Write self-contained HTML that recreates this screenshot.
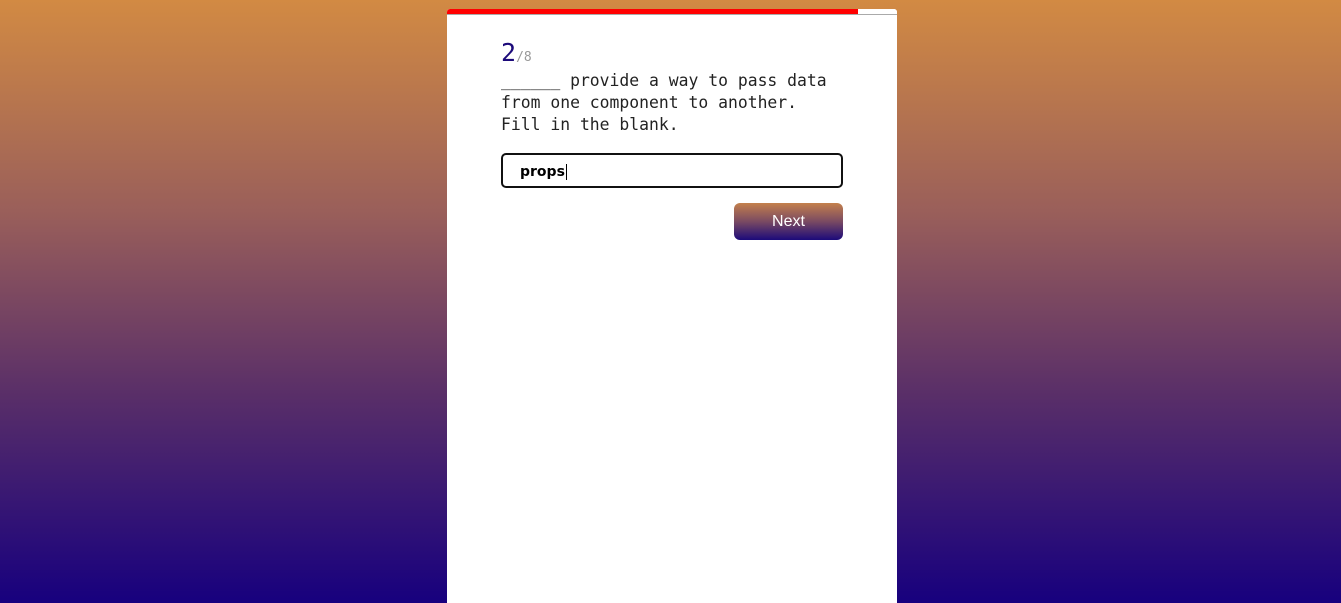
<!DOCTYPE html>
<html><head><style>
html,body{margin:0;padding:0;width:1341px;height:603px;overflow:hidden}
body{background:linear-gradient(to bottom,#d28a43 0%,#9a5f5a 35%,#5a2f68 65%,#17007e 100%);position:relative;font-family:"DejaVu Sans Mono","Liberation Mono",monospace}
.card{position:absolute;left:447px;top:9px;width:450px;height:600px;background:#fff;border-radius:3px 3px 0 0;overflow:hidden}
.bar{position:absolute;left:0;top:0;width:450px;height:5px;border-bottom:1px solid #aaa;background:#fff}
.bar div{width:411px;height:5px;background:#f00}
.num{position:absolute;left:54px;top:29px;color:#1c0a7a;font-size:25px}
.num span{font-size:13px;color:#999}
.q{position:absolute;left:54px;top:61px;font-size:16.4px;line-height:22px;color:#222;width:335px}
.inp{position:absolute;left:54px;top:144px;width:338px;height:31px;border:2px solid #111;border-radius:5px;box-sizing:content-box}
.inp span{position:absolute;left:17px;top:9px;font:bold 14px "DejaVu Sans","Liberation Sans",sans-serif;color:#000;border-right:1px solid #000;padding-right:1px}
.btn{position:absolute;left:287px;top:194px;width:109px;height:37px;border-radius:6px;background:linear-gradient(to bottom,#c4804c,#7a4a62 50%,#1c0a7a);color:#fff;font:16px "Liberation Sans",sans-serif;text-align:center;line-height:37px}
</style></head><body>
<div class="card">
<div class="bar"><div></div></div>
<div class="num">2<span>/8</span></div>
<div class="q">______ provide a way to pass data from one component to another. Fill in the blank.</div>
<div class="inp"><span>props</span></div>
<div class="btn">Next</div>
</div>
</body></html>
